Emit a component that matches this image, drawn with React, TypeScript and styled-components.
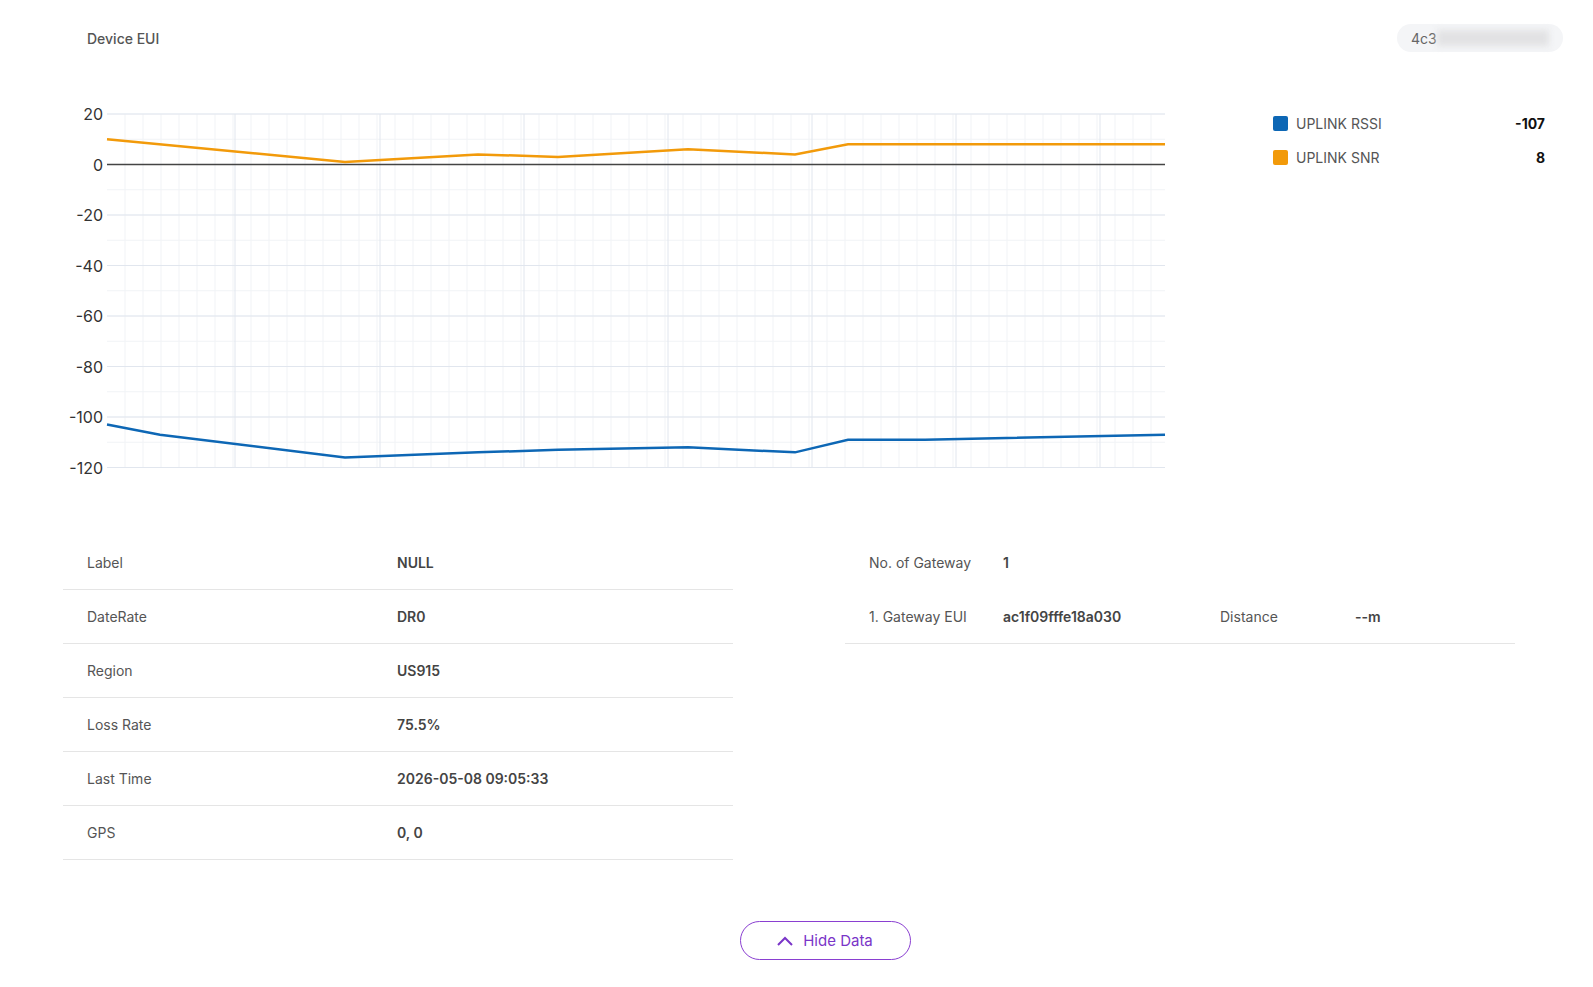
import styled, { createGlobalStyle } from 'styled-components'

const GlobalStyle = createGlobalStyle`
  html, body {
    margin: 0;
    background: #fff;
    font-family: Inter, "Noto Sans", sans-serif;
    color: #333;
    overflow: hidden;
  }
`

const Page = styled.div`
  width: 100%;
  height: 100vh;
  padding: 0 30px 0 63px;
  box-sizing: border-box;
  display: flex;
  flex-direction: column;
`

const Header = styled.div`
  height: 76px;
  display: flex;
  align-items: center;
  justify-content: space-between;
  padding-left: 24px;
`

const Title = styled.span`
  font-size: 14px;
  font-weight: 500;
  color: #555;
`

const Pill = styled.div`
  width: 166px;
  height: 28px;
  border-radius: 14px;
  background: #f4f5f7;
  display: flex;
  align-items: center;
  padding-left: 14px;
  box-sizing: border-box;
  font-size: 14px;
  color: #666;
`

const Blur = styled.span`
  width: 112px;
  height: 16px;
  background: #e2e2e4;
  filter: blur(3px);
`

const ChartRow = styled.div`
  display: flex;
  height: 460px;
`

const Legend = styled.div`
  margin-left: 100px;
  margin-top: 37px;
  width: 272px;
  display: flex;
  flex-direction: column;
  gap: 14px;
`

const LegendItem = styled.div`
  display: flex;
  align-items: center;
  font-size: 14px;
  color: #555;
  height: 20px;
`

const Swatch = styled.span<{ $c: string }>`
  width: 15px;
  height: 15px;
  border-radius: 2px;
  background: ${p => p.$c};
  margin-right: 8px;
`

const LegendValue = styled.span`
  margin-left: auto;
  font-weight: 700;
  color: #111;
`

const DataRow = styled.div`
  display: flex;
  justify-content: space-between;
  padding-right: 48px;
`

const Table = styled.div`
  width: 670px;
`

const Row = styled.div`
  height: 53px;
  display: flex;
  align-items: center;
  padding-left: 24px;
  border-bottom: 1px solid #e5e5e5;
  font-size: 14px;
`

const Label = styled.span<{ $w: number }>`
  width: ${p => p.$w}px;
  color: #555;
`

const Value = styled.span<{ $w?: number }>`
  font-weight: 600;
  color: #444;
  ${p => (p.$w ? `width: ${p.$w}px;` : '')}
`

const GwRow = styled(Row)<{ $noline?: boolean }>`
  ${p => (p.$noline ? 'border-bottom-color: transparent;' : '')}
`

const Footer = styled.div`
  flex: 1;
  display: flex;
  justify-content: center;
  align-items: flex-end;
  padding-bottom: 27px;
  padding-left: 24px;
`

const HideButton = styled.button`
  width: 171px;
  height: 39px;
  border-radius: 20px;
  border: 1px solid #8a3fd1;
  background: #fff;
  color: #7a35c8;
  font-family: inherit;
  font-size: 15px;
  display: flex;
  align-items: center;
  justify-content: center;
  gap: 10px;
`

const W = 1110
const X0 = 44
const X1 = 1102
const Y20 = 38
const PX = 50.5 / 20
const yv = (v: number) => Y20 + (20 - v) * PX

const snr = [[107, 10], [345, 1], [478, 4], [558, 3], [688, 6], [795, 4], [848, 8], [1165, 8]]
const rssi = [[107, -103], [160, -107], [345, -116], [478, -114], [558, -113], [688, -112], [795, -114], [848, -109], [925, -109], [1165, -107]]
const pts = (d: number[][]) => d.map(([x, v]) => `${x - 63},${yv(v)}`).join(' ')

const Chart = () => {
  const majors = [235, 380, 524, 668, 812, 956, 1100].map(x => x - 63)
  const minors: number[] = []
  for (let x = 125; x < 1165; x += 18) minors.push(x - 63)
  const hMinor: number[] = []
  for (let v = 20; v >= -120; v -= 10) hMinor.push(yv(v))
  const labels = [20, 0, -20, -40, -60, -80, -100, -120]
  return (
    <svg width={W} height={420}>
      {minors.map(x => <line key={'m' + x} x1={x} x2={x} y1={Y20} y2={yv(-120)} stroke="#f1f3f6" />)}
      {hMinor.map(y => <line key={'h' + y} x1={X0} x2={X1} y1={y} y2={y} stroke="#f1f3f6" />)}
      {majors.map(x => <line key={'M' + x} x1={x} x2={x} y1={Y20} y2={yv(-120)} stroke="#e1e6ee" />)}
      {labels.map(v => (
        <g key={v}>
          <line x1={X0} x2={X1} y1={yv(v)} y2={yv(v)} stroke={v === 0 ? '#444' : '#e1e6ee'} strokeWidth={v === 0 ? 1.5 : 1} />
          <text x={40} y={yv(v) + 6} textAnchor="end" fontSize="16" fill="#333" fontFamily="Inter, sans-serif">{v}</text>
        </g>
      ))}
      <polyline points={pts(snr)} fill="none" stroke="#f29a0a" strokeWidth="2.5" />
      <polyline points={pts(rssi)} fill="none" stroke="#0d67b5" strokeWidth="2.5" />
    </svg>
  )
}

const left = [
  ['Label', 'NULL'],
  ['DateRate', 'DR0'],
  ['Region', 'US915'],
  ['Loss Rate', '75.5%'],
  ['Last Time', '2026-05-08 09:05:33'],
  ['GPS', '0, 0'],
]

export default function App() {
  return (
    <>
      <GlobalStyle />
      <Page>
        <Header>
          <Title>Device EUI</Title>
          <Pill>4c3<Blur /></Pill>
        </Header>
        <ChartRow>
          <Chart />
          <Legend>
            <LegendItem><Swatch $c="#0d67b5" />UPLINK RSSI<LegendValue>-107</LegendValue></LegendItem>
            <LegendItem><Swatch $c="#f29a0a" />UPLINK SNR<LegendValue>8</LegendValue></LegendItem>
          </Legend>
        </ChartRow>
        <DataRow>
          <Table>
            {left.map(([l, v]) => (
              <Row key={l}>
                <Label $w={310}>{l}</Label>
                <Value>{v}</Value>
              </Row>
            ))}
          </Table>
          <Table>
            <GwRow $noline>
              <Label $w={134}>No. of Gateway</Label>
              <Value>1</Value>
            </GwRow>
            <GwRow>
              <Label $w={134}>1. Gateway EUI</Label>
              <Value $w={217}>ac1f09fffe18a030</Value>
              <Label $w={135}>Distance</Label>
              <Value>--m</Value>
            </GwRow>
          </Table>
        </DataRow>
        <Footer>
          <HideButton>
            <svg width="16" height="10" viewBox="0 0 16 10"><path d="M1 9 L8 2 L15 9" fill="none" stroke="#7a35c8" strokeWidth="2" /></svg>
            Hide Data
          </HideButton>
        </Footer>
      </Page>
    </>
  )
}
